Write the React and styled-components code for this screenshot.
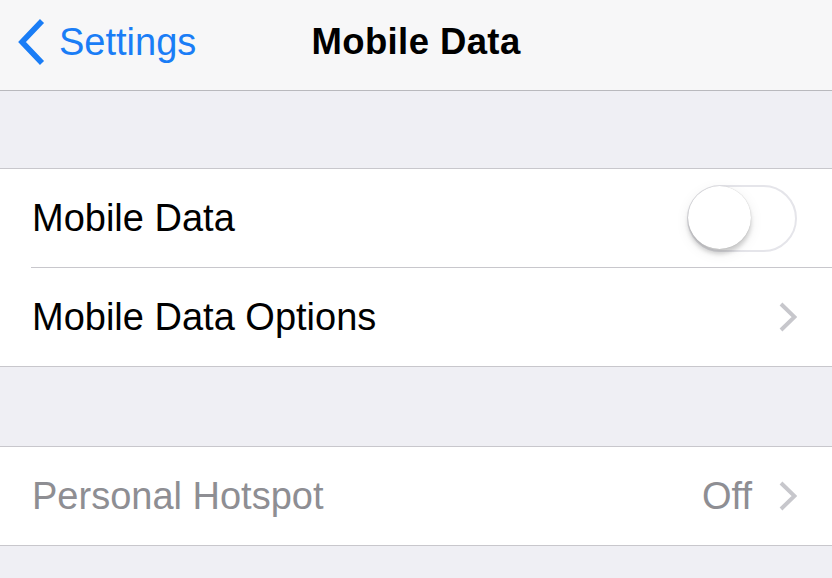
import React from 'react'
import styled, { createGlobalStyle } from 'styled-components'

const GlobalStyle = createGlobalStyle`
  html, body {
    margin: 0;
    padding: 0;
    background: #efeff4;
    font-family: 'Liberation Sans', Arial, sans-serif;
    -webkit-font-smoothing: antialiased;
  }
`

const Screen = styled.div`
  width: 832px;
  height: 578px;
  overflow: hidden;
  background: #efeff4;
`

const NavBar = styled.header`
  position: relative;
  height: 90px;
  background: #f7f7f8;
  border-bottom: 1px solid #b9b9bd;
  display: flex;
  align-items: center;
  justify-content: center;
`

const Back = styled.a`
  position: absolute;
  left: 16px;
  top: 0;
  height: 90px;
  display: flex;
  align-items: center;
  gap: 13px;
  color: #1a7df6;
  font-size: 38px;
  text-decoration: none;
  padding-bottom: 6px;
  box-sizing: border-box;
`

const Title = styled.h1`
  margin: 0;
  font-size: 36.5px;
  font-weight: 700;
  color: #000;
  letter-spacing: 0.4px;
  padding-bottom: 6px;
`

const Gap = styled.div`
  height: ${p => p.h}px;
`

const Group = styled.section`
  background: #fff;
  border-top: 1px solid #c8c7cc;
  border-bottom: 1px solid #c8c7cc;
`

const Row = styled.div`
  position: relative;
  height: 98px;
  display: flex;
  align-items: center;
  padding: 0 35px 0 32px;
  & + & {
    border-top: 1px solid transparent;
  }
  & + &::before {
    content: '';
    position: absolute;
    top: -1px;
    left: 31px;
    right: 0;
    height: 1px;
    background: #c8c7cc;
  }
`

const Label = styled.span`
  flex: 1;
  font-size: 38px;
  color: ${p => (p.dim ? '#8e8e93' : '#000')};
`

const Detail = styled.span`
  font-size: 38px;
  color: #8e8e93;
  margin-right: 27px;
`

const Track = styled.div`
  position: relative;
  width: 110px;
  height: 67px;
  box-sizing: border-box;
  border: 2px solid #e5e5ea;
  border-radius: 34px;
  background: #fff;
`

const Knob = styled.div`
  position: absolute;
  left: -1px;
  top: -1px;
  width: 63px;
  height: 63px;
  border-radius: 50%;
  background: #fff;
  box-shadow: 0 5px 4px rgba(0, 0, 0, 0.16), 0 0 1px rgba(0, 0, 0, 0.25), 0 4px 14px rgba(0, 0, 0, 0.08);
`

const Chevron = () => (
  <svg width="18" height="30" viewBox="0 0 18 30">
    <path d="M2 2 L15.5 15 L2 28" fill="none" stroke="#c7c7cc" strokeWidth="4" />
  </svg>
)

const BackChevron = () => (
  <svg width="30" height="48" viewBox="0 0 30 48">
    <path d="M26 3 L6 24 L26 45" fill="none" stroke="#1a7df6" strokeWidth="5.6" />
  </svg>
)

export default function App() {
  return (
    <Screen>
      <GlobalStyle />
      <NavBar>
        <Back href="#">
          <BackChevron />
          Settings
        </Back>
        <Title>Mobile Data</Title>
      </NavBar>
      <Gap h={77} />
      <Group>
        <Row>
          <Label>Mobile Data</Label>
          <Track>
            <Knob />
          </Track>
        </Row>
        <Row>
          <Label>Mobile Data Options</Label>
          <Chevron />
        </Row>
      </Group>
      <Gap h={79} />
      <Group>
        <Row>
          <Label dim>Personal Hotspot</Label>
          <Detail>Off</Detail>
          <Chevron />
        </Row>
      </Group>
    </Screen>
  )
}
